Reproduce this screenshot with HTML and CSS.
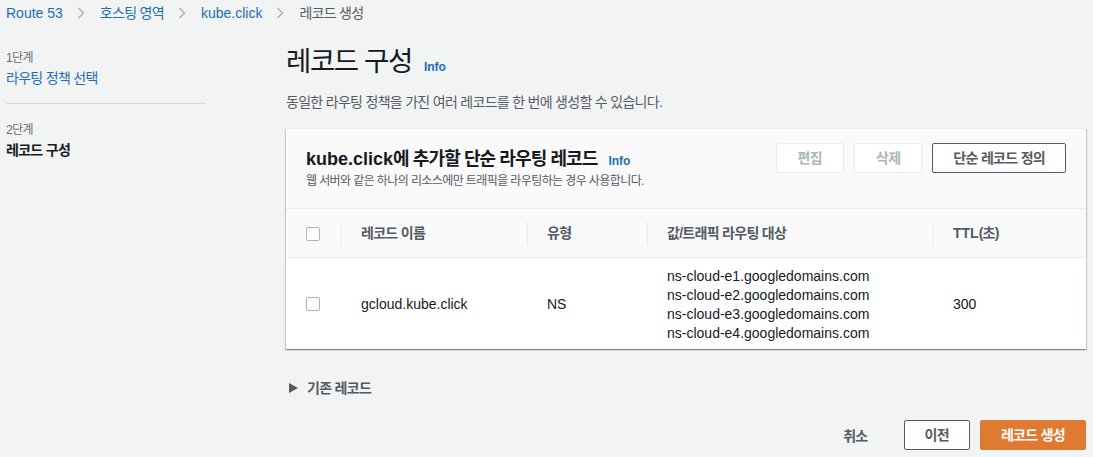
FILE: index.html
```html
<!DOCTYPE html>
<html lang="ko">
<head>
<meta charset="utf-8">
<link rel="stylesheet" href="styles.css">
</head>
<body>
<nav class="crumbs">
  <a class="crumb">Route 53</a>
  <svg class="chev" width="8" height="12" viewBox="0 0 8 12"><polyline points="1.5,1 6.5,6 1.5,11" fill="none" stroke="#aab7b8" stroke-width="1.6"/></svg>
  <a class="crumb k">호스팅 영역</a>
  <svg class="chev" width="8" height="12" viewBox="0 0 8 12"><polyline points="1.5,1 6.5,6 1.5,11" fill="none" stroke="#aab7b8" stroke-width="1.6"/></svg>
  <a class="crumb">kube.click</a>
  <svg class="chev" width="8" height="12" viewBox="0 0 8 12"><polyline points="1.5,1 6.5,6 1.5,11" fill="none" stroke="#aab7b8" stroke-width="1.6"/></svg>
  <span class="crumb current k">레코드 생성</span>
</nav>
<div class="layout">
  <aside class="steps">
    <div class="step-num k">1단계</div>
    <a class="step-link k">라우팅 정책 선택</a>
    <hr class="step-div">
    <div class="step-num k">2단계</div>
    <div class="step-cur k">레코드 구성</div>
  </aside>
  <main class="main">
    <h1 class="title"><span class="k">레코드 구성</span><a class="info">Info</a></h1>
    <p class="desc k">동일한 라우팅 정책을 가진 여러 레코드를 한 번에 생성할 수 있습니다.</p>
    <section class="card">
      <header class="card-head">
        <div class="card-titles">
          <h2 class="card-title">kube.click<span class="k">에 추가할 단순 라우팅 레코드</span><a class="info">Info</a></h2>
          <div class="card-sub k">웹 서버와 같은 하나의 리소스에만 트래픽을 라우팅하는 경우 사용합니다.</div>
        </div>
        <div class="card-actions">
          <button class="btn disabled k">편집</button>
          <button class="btn disabled k">삭제</button>
          <button class="btn k">단순 레코드 정의</button>
        </div>
      </header>
      <div class="table">
        <div class="tr th-row">
          <div class="cell c0"><span class="cb"></span></div>
          <div class="cell c1 th sep k">레코드 이름</div>
          <div class="cell c2 th sep k">유형</div>
          <div class="cell c3 th sep k">값/트래픽 라우팅 대상</div>
          <div class="cell c4 th sep">TTL<span class="k">(초)</span></div>
        </div>
        <div class="tr body-row">
          <div class="cell c0"><span class="cb"></span></div>
          <div class="cell c1">gcloud.kube.click</div>
          <div class="cell c2">NS</div>
          <div class="cell c3 values">
            <div>ns-cloud-e1.googledomains.com</div>
            <div>ns-cloud-e2.googledomains.com</div>
            <div>ns-cloud-e3.googledomains.com</div>
            <div>ns-cloud-e4.googledomains.com</div>
          </div>
          <div class="cell c4">300</div>
        </div>
      </div>
    </section>
    <div class="expander">
      <svg width="9" height="10" viewBox="0 0 9 10"><polygon points="0,0 9,5 0,10" fill="#545b64"/></svg>
      <span class="k">기존 레코드</span>
    </div>
    <footer class="footer">
      <button class="link-btn k">취소</button>
      <button class="btn k">이전</button>
      <button class="btn primary k">레코드 생성</button>
    </footer>
  </main>
</div>
</body>
</html>
```

FILE: styles.css
```css
* { box-sizing: border-box; }
html, body {
  margin: 0;
  padding: 0;
  background: #f2f3f3;
  font-family: "Liberation Sans", "Noto Sans CJK KR", sans-serif;
  font-size: 14px;
  color: #16191f;
  width: 1093px;
  height: 457px;
  overflow: hidden;
}
.k { letter-spacing: -0.05em; }
a { cursor: pointer; }

.crumbs {
  height: 26px;
  display: flex;
  align-items: center;
  padding-left: 6px;
}
.crumb { color: #1c6fb8; line-height: 26px; }
.crumb.current { color: #545b64; }
.chev { margin: 0 15px 0 14px; }

.layout {
  display: flex;
}
.steps {
  width: 286px;
  padding: 24px 0 0 6px;
  flex: none;
}
.step-num { font-size: 12px; line-height: 16px; color: #687078; }
.step-link { display: block; margin-top: 2px; line-height: 20px; color: #1c6fb8; }
.step-div {
  width: 200px;
  margin: 15px 0 18px 0;
  border: 0;
  border-top: 1px solid #d5dbdb;
  height: 0;
}
.step-cur { margin-top: 2px; line-height: 20px; font-weight: 700; }

.main {
  width: 800px;
  flex: none;
}
.title {
  margin: 18px 0 0 0;
  font-size: 27.5px;
  font-weight: 400;
  line-height: 36px;
  height: 36px;
  color: #16191f;
}
.info {
  color: #1c6fb8;
  font-size: 12px;
  font-weight: 700;
  line-height: 1;
  margin-left: 12px;
  letter-spacing: 0;
}
.desc {
  margin: 12px 0 0 0;
  line-height: 20px;
  color: #545b64;
}
.card {
  margin-top: 16px;
  background: #fff;
  border-top: 1px solid #eaeded;
  box-shadow: 0 1px 1px 0 rgba(0,28,36,.3), 1px 1px 1px 0 rgba(0,28,36,.15), -1px 1px 1px 0 rgba(0,28,36,.15);
}
.card-head {
  display: flex;
  justify-content: space-between;
  align-items: flex-start;
  padding: 14px 20px 0 20px;
  height: 79px;
  background: #fafafa;
}
.card-titles { padding-top: 4px; }
.card-title {
  margin: 0;
  font-size: 18px;
  font-weight: 700;
  line-height: 24px;
  height: 24px;
}
.card-title .info { margin-left: 11px; }
.card-sub {
  margin-top: 2px;
  font-size: 12px;
  line-height: 16px;
  color: #545b64;
}
.card-actions {
  display: flex;
  gap: 10px;
}
.btn {
  height: 30px;
  padding: 0 20px;
  border: 1px solid #545b64;
  border-radius: 2px;
  background: #fff;
  color: #545b64;
  font-family: inherit;
  font-size: 14px;
  font-weight: 700;
  line-height: 28px;
}
.btn.disabled {
  border-color: #eaeded;
  color: #aab7b8;
  padding: 0 21px;
}
.btn.primary {
  background: #df7a33;
  border-color: #df7a33;
  color: #fff;
}

.table { border-top: 1px solid #eaeded; }
.tr { display: flex; }
.th-row {
  height: 49px;
  background: #fafafa;
  border-bottom: 1px solid #eaeded;
  align-items: center;
}
.body-row {
  height: 91px;
  align-items: center;
}
.cell { padding-left: 20px; line-height: 20px; }
.c0 { width: 55px; display: flex; align-items: center; }
.c1 { width: 186px; }
.c2 { width: 120px; }
.c3 { width: 286px; }
.c4 { width: 153px; }
.th {
  font-weight: 700;
  color: #545b64;
  align-self: stretch;
  display: flex;
  align-items: center;
}
.sep {
  background: linear-gradient(#eaeded, #eaeded) left center / 1px 24px no-repeat;
}
.th-row .c0 .cb { margin-top: 2px; }
.cb {
  display: inline-block;
  width: 14px;
  height: 14px;
  border: 1px solid #aab7b8;
  border-radius: 2px;
  background: #fff;
}
.values { line-height: 19px; padding-top: 2px; }

.expander {
  margin-top: 29px;
  padding-left: 3px;
  display: flex;
  align-items: center;
  gap: 9px;
  line-height: 20px;
  font-weight: 700;
  color: #545b64;
}
.footer {
  margin-top: 22px;
  display: flex;
  justify-content: flex-end;
  align-items: center;
  gap: 10px;
}
.link-btn {
  border: 0;
  background: none;
  font-family: inherit;
  font-size: 14px;
  font-weight: 700;
  color: #545b64;
  padding: 0 20px;
  height: 30px;
  margin-right: 6px;
}
```
